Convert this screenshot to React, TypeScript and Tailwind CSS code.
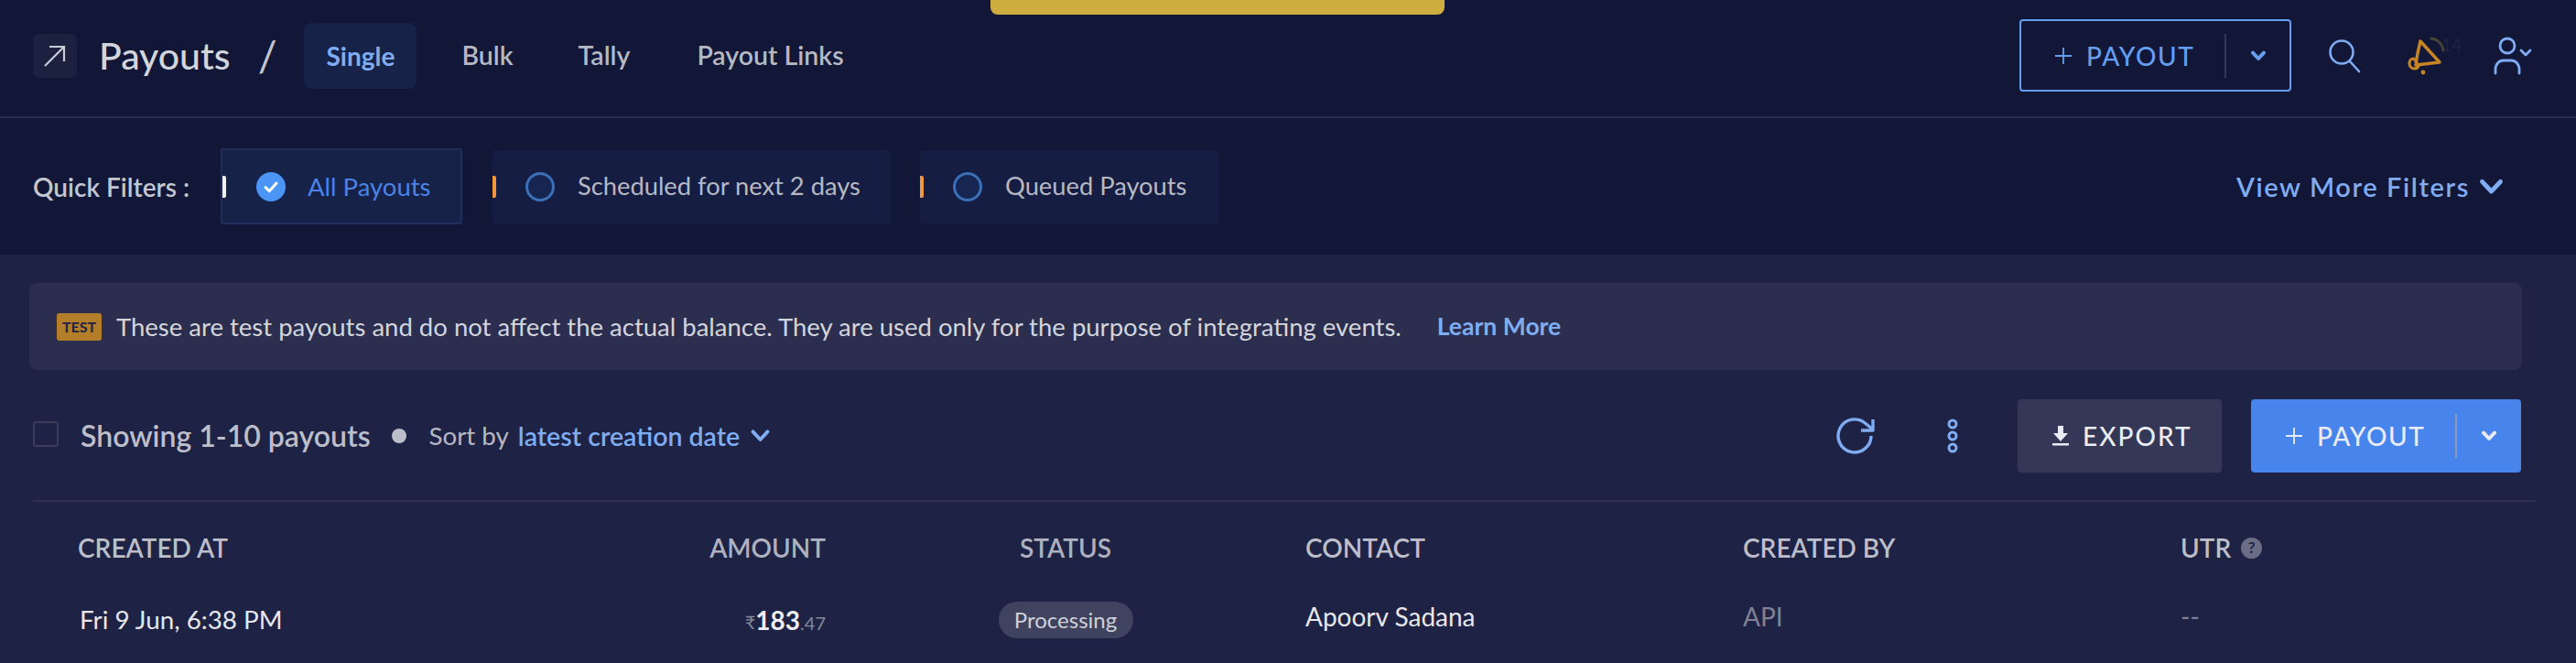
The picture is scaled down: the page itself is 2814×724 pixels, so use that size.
import React from 'react';

const Chevron = ({ className, weight = 3.4 }: { className: string; weight?: number }) => (
    <svg viewBox="0 0 20 14" fill="none" stroke="currentColor" strokeLinecap="round" strokeLinejoin="round" strokeWidth={weight} className={className}>
        <path d="M3 3l7 7.5L17 3" />
    </svg>
);

const tabs = [
    { label: 'Bulk', className: 'ml-[49px]' },
    { label: 'Tally', className: 'ml-[71px]' },
    { label: 'Payout Links', className: 'ml-[73px]' },
];

const filters = [
    { label: 'Scheduled for next 2 days', className: 'ml-[33px] w-[435px]' },
    { label: 'Queued Payouts', className: 'ml-[32px] w-[326px]' },
];

function FilterTick({ color }: { color: string }) {
    return <span className={`absolute left-0 top-[28px] h-[24px] w-[4px] rounded-r-[2px] ${color}`} />;
}

function PayoutButton({ primary }: { primary: boolean }) {
    return (
        <button
            className={
                primary
                    ? 'flex h-[80px] w-[295px] items-center rounded-[4px] bg-[#4784ec] pl-[38px] text-[#e9ecf4]'
                    : 'flex h-[79px] w-[297px] items-center rounded-[4px] border-2 border-[#659ef0] pl-[37px] text-[#659ef0]'
            }
        >
            <svg viewBox="0 0 18 18" fill="none" stroke="currentColor" strokeWidth="1.8" className="h-[18px] w-[18px]">
                <path d="M9 0v18M0 9h18" />
            </svg>
            <span className="ml-[16px] w-[120px] text-left text-[28px] font-medium leading-none tracking-[1.6px]">PAYOUT</span>
            <span className={`ml-[31px] h-[48px] w-[2px] ${primary ? 'bg-[#8b9aba]' : 'bg-[#32395a]'}`} />
            <Chevron weight={4.6} className="ml-[26px] h-[12px] w-[18px]" />
        </button>
    );
}

export default function App() {
    return (
        <div className="relative h-[724px] w-[2814px] overflow-hidden bg-[#1e2244] font-[family-name:Lato,sans-serif]">
            <div className="absolute left-[1082px] top-0 h-[16px] w-[496px] rounded-b-[8px] bg-[#cdae3e]" />

            {/* Top bar */}
            <header className="flex h-[129px] items-center border-b-2 border-[#2a2e4b] bg-[#121737] pb-[6px] pl-[36px] pr-[48px]">
                <div className="flex h-[48px] w-[48px] items-center justify-center rounded-[7px] bg-[#1c2140] text-[#c9ccd4]">
                    <svg viewBox="0 0 26 26" fill="none" stroke="currentColor" strokeWidth="2.2" className="h-[26px] w-[26px]">
                        <path d="M2 24L23 3M7 3h16v16" />
                    </svg>
                </div>
                <h1 className="ml-[24px] text-[41px] font-medium leading-none text-[#d3d5dc]">Payouts</h1>
                <span className="ml-[30px] text-[46px] leading-none text-[#c3c5cd]">/</span>
                <div className="ml-[30px] flex h-[72px] w-[123px] items-center justify-center rounded-[8px] bg-[#162248] text-[28px] font-bold text-[#7facf3]">
                    Single
                </div>
                {tabs.map((tab) => (
                    <span key={tab.label} className={`${tab.className} text-[28.5px] font-semibold text-[#b6b9c4]`}>
                        {tab.label}
                    </span>
                ))}
                <div className="ml-auto">
                    <PayoutButton primary={false} />
                </div>
                <svg viewBox="0 0 36 38" fill="none" stroke="#7facf3" strokeWidth="2.6" strokeLinecap="round" className="ml-[40px] h-[38px] w-[36px]">
                    <circle cx="15" cy="15" r="12.5" />
                    <path d="M24 25l10 11" />
                </svg>
                <div className="relative ml-[51px] h-[44px] w-[58px]">
                    <svg viewBox="0 0 58 44" fill="none" className="absolute inset-0 h-[44px] w-[58px]">
                        <path d="M26 3c7 1 12 6 13 13" stroke="#4a4238" strokeWidth="3" strokeLinecap="round" />
                        <path d="M14 6L35 29 9 32l2-13z" stroke="#c68522" strokeWidth="3.4" strokeLinejoin="round" />
                        <path d="M2 30c0-3 2-5 5-5l5 8c-1 2-3 3-5 3-3 0-5-3-5-6z" stroke="#c68522" strokeWidth="3.2" strokeLinejoin="round" />
                        <circle cx="17" cy="40" r="2.4" fill="#c68522" />
                    </svg>
                    <span className="absolute left-[37px] top-[0px] text-[19px] leading-none text-[#1f2342]">14</span>
                </div>
                <svg viewBox="0 0 42 44" fill="none" stroke="#7facf3" strokeWidth="2.8" strokeLinecap="round" strokeLinejoin="round" className="ml-[36px] h-[44px] w-[42px]">
                    <circle cx="15" cy="11" r="8" />
                    <path d="M2 41v-4c0-6 4-10 9-10h8c5 0 9 4 9 10v4" />
                    <path d="M30 16l5 5 5-5" />
                </svg>
            </header>

            {/* Quick filters */}
            <section className="flex h-[149px] items-center bg-[#121737] pl-[36px] pr-[78px]">
                <span className="w-[205px] text-[28px] font-semibold text-[#c4c6cf]">Quick Filters :</span>
                <div className="relative flex h-[83px] w-[264px] items-center rounded-[3px] border-2 border-[#1e2f5e] bg-[#162248] pl-[37px]">
                    <FilterTick color="bg-[#eef0f5]" />
                    <svg viewBox="0 0 32 32" className="h-[32px] w-[32px]">
                        <circle cx="16" cy="16" r="16" fill="#4a95f5" />
                        <path d="M10 16.5l4.2 4.2L22 12" fill="none" stroke="#fff" strokeWidth="3" strokeLinecap="round" strokeLinejoin="round" />
                    </svg>
                    <span className="ml-[24px] text-[27.5px] text-[#4a83e8]">All Payouts</span>
                </div>
                {filters.map((filter) => (
                    <div key={filter.label} className={`${filter.className} relative flex h-[80px] items-center rounded-[4px] bg-[#151d42] pl-[36px]`}>
                        <FilterTick color="bg-[#f0983e]" />
                        <span className="h-[32px] w-[32px] rounded-full border-[3px] border-[#3b70b9] bg-[#172650]" />
                        <span className="ml-[25px] text-[27.3px] text-[#b6b9c4]">{filter.label}</span>
                    </div>
                ))}
                <div className="ml-auto flex items-center text-[#7facf3]">
                    <span className="text-[29px] font-semibold tracking-[1.6px]">View More Filters</span>
                    <Chevron className="ml-[9px] h-[20px] w-[29px]" />
                </div>
            </section>

            {/* Test mode notice */}
            <div className="mx-[32px] mt-[31px] flex h-[95px] w-[2723px] items-center rounded-[8px] bg-[#2b2e4e] pl-[30px]">
                <span className="flex h-[30px] w-[49px] items-center justify-center rounded-[3px] bg-[#b37d2a] text-[16px] font-bold text-[#1e2244]">TEST</span>
                <span className="ml-[16px] text-[27.5px] text-[#d3d5dc]">
                    These are test payouts and do not affect the actual balance. They are used only for the purpose of integrating events.
                </span>
                <span className="ml-[39px] text-[26.5px] font-bold text-[#7facf3]">Learn More</span>
            </div>

            {/* List toolbar */}
            <div className="mx-[36px] mt-[32px] flex h-[112px] w-[2735px] items-start border-b-2 border-[#2e3154] pb-[32px] pr-[17px]">
                <div className="flex h-[80px] flex-1 items-center">
                    <span className="mb-[4px] h-[28px] w-[28px] rounded-[3px] border-2 border-[#3a3d5a]" />
                    <span className="ml-[24px] text-[32px] font-semibold text-[#bcbfca]">Showing 1-10 payouts</span>
                    <span className="ml-[23px] h-[16px] w-[16px] rounded-full bg-[#bcbfca]" />
                    <span className="ml-[25px] text-[27.7px] text-[#b6b9c4]">Sort by</span>
                    <span className="ml-[10px] text-[28.5px] font-semibold text-[#7facf3]">latest creation date</span>
                    <Chevron className="ml-[10px] h-[16px] w-[25px] text-[#7facf3]" />
                </div>
                <svg viewBox="0 0 44 40" fill="none" stroke="#7facf3" strokeWidth="3.4" className="mt-[20px] h-[40px] w-[44px]">
                    <path d="M39 20a18 18 0 1 1-6-13.5L41 13" />
                    <path d="M41 2v12H28" strokeLinejoin="round" />
                </svg>
                <svg viewBox="0 0 12 38" fill="none" stroke="#7facf3" strokeWidth="3" className="ml-[78px] mt-[21px] h-[38px] w-[12px]">
                    <circle cx="6" cy="6" r="4" />
                    <circle cx="6" cy="19" r="4" />
                    <circle cx="6" cy="32" r="4" />
                </svg>
                <button className="ml-[65px] flex h-[80px] w-[223px] items-center rounded-[4px] bg-[#343755] pl-[38px] text-[#e9ecf4]">
                    <svg viewBox="0 0 18 22" fill="currentColor" className="h-[22px] w-[18px]">
                        <path d="M6 0h6v8h5l-8 9-8-9h5zM0 19h18v2.5H0z" />
                    </svg>
                    <span className="ml-[15px] text-[28px] font-medium leading-none tracking-[2px]">EXPORT</span>
                </button>
                <div className="ml-[32px]">
                    <PayoutButton primary={true} />
                </div>
            </div>

            {/* Payouts table */}
            <div className="mx-[36px] grid grid-cols-[566px_300px_524px_478px_478px_1fr] pt-[34px]">
                <div className="pl-[49px] text-[28px] font-semibold leading-[32px] text-[#bcbfca]">CREATED AT</div>
                <div className="text-right text-[28px] font-semibold leading-[32px] text-[#aeb1bf]">AMOUNT</div>
                <div className="text-center text-[28px] font-semibold leading-[32px] text-[#aeb1bf]">STATUS</div>
                <div className="text-[28px] font-semibold leading-[32px] text-[#bcbfca]">CONTACT</div>
                <div className="text-[28px] font-semibold leading-[32px] text-[#bcbfca]">CREATED BY</div>
                <div className="flex items-center text-[28px] font-semibold leading-[32px] text-[#bcbfca]">
                    UTR
                    <span className="ml-[11px] flex h-[23px] w-[23px] items-center justify-center rounded-full bg-[#6a6d85] text-[17px] font-bold text-[#1e2244]">?</span>
                </div>

                <div className="mt-[43px] flex h-[40px] items-center pl-[51px] text-[27.8px] text-[#e6e7ec]">Fri 9 Jun, 6:38 PM</div>
                <div className="mt-[43px] flex h-[40px] items-center justify-end text-[#858899]">
                    <span className="mt-[3px] text-[20px]">₹</span>
                    <span className="text-[28px] font-bold text-[#eceef3]">183</span>
                    <span className="mt-[5px] text-[20px]">.47</span>
                </div>
                <div className="mt-[43px] flex justify-center">
                    <span className="flex h-[40px] w-[147px] items-center justify-center rounded-full bg-[#404360] text-[24px] text-[#cfd1d9]">Processing</span>
                </div>
                <div className="mt-[40px] flex h-[38px] items-center text-[28px] text-[#e6e7ec]">Apoorv Sadana</div>
                <div className="mt-[40px] flex h-[38px] items-center text-[28px] text-[#7f8296]">API</div>
                <div className="mt-[40px] flex h-[38px] items-center text-[28px] text-[#7f8296]">--</div>
            </div>
        </div>
    );
}
